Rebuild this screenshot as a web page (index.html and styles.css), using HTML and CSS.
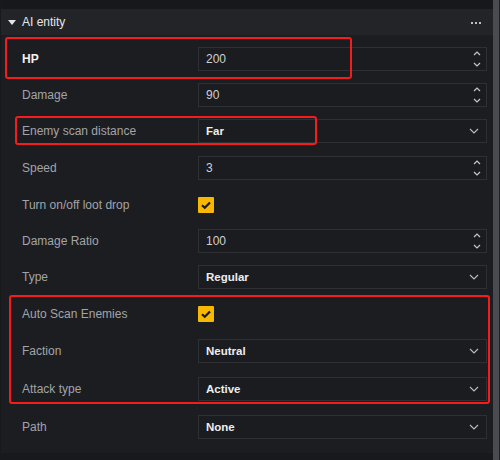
FILE: index.html
```html
<!DOCTYPE html>
<html>
<head>
<meta charset="utf-8">
<link rel="stylesheet" href="styles.css">
</head>
<body>
<div class="app">
  <div class="content">
    <div class="topstrip"></div>
    <div class="header">
      <div class="title">
        <svg class="caret" width="8" height="5" viewBox="0 0 8 5"><path d="M0 0H8L4 5Z" fill="#e6e6e6"/></svg>
        <span>AI entity</span>
      </div>
      <div class="dots"><i></i><i></i><i></i></div>
    </div>
    <div class="rows">
      <div class="row g12">
        <div class="label strong">HP</div>
        <div class="box num"><span>200</span>
          <div class="spin">
            <svg width="8" height="5" viewBox="0 0 8 5"><path d="M1 4L4 1L7 4" fill="none" stroke="#c8c8c8" stroke-width="1.2"/></svg>
            <svg width="8" height="5" viewBox="0 0 8 5"><path d="M1 1L4 4L7 1" fill="none" stroke="#c8c8c8" stroke-width="1.2"/></svg>
          </div>
        </div>
      </div>
      <div class="row g12">
        <div class="label">Damage</div>
        <div class="box num"><span>90</span>
          <div class="spin">
            <svg width="8" height="5" viewBox="0 0 8 5"><path d="M1 4L4 1L7 4" fill="none" stroke="#c8c8c8" stroke-width="1.2"/></svg>
            <svg width="8" height="5" viewBox="0 0 8 5"><path d="M1 1L4 4L7 1" fill="none" stroke="#c8c8c8" stroke-width="1.2"/></svg>
          </div>
        </div>
      </div>
      <div class="row g13">
        <div class="label">Enemy scan distance</div>
        <div class="box sel"><span>Far</span>
          <svg class="chev" width="10" height="6" viewBox="0 0 10 6"><path d="M1 1L5 5L9 1" fill="none" stroke="#bdbdbd" stroke-width="1.1"/></svg>
        </div>
      </div>
      <div class="row g13">
        <div class="label">Speed</div>
        <div class="box num"><span>3</span>
          <div class="spin">
            <svg width="8" height="5" viewBox="0 0 8 5"><path d="M1 4L4 1L7 4" fill="none" stroke="#c8c8c8" stroke-width="1.2"/></svg>
            <svg width="8" height="5" viewBox="0 0 8 5"><path d="M1 1L4 4L7 1" fill="none" stroke="#c8c8c8" stroke-width="1.2"/></svg>
          </div>
        </div>
      </div>
      <div class="row g12">
        <div class="label">Turn on/off loot drop</div>
        <div class="check">
          <svg width="16" height="16" viewBox="0 0 16 16"><path d="M4 8.2L6.8 10.8L12 5.4" fill="none" stroke="#1b1b1b" stroke-width="2.2"/></svg>
        </div>
      </div>
      <div class="row g12">
        <div class="label">Damage Ratio</div>
        <div class="box num"><span>100</span>
          <div class="spin">
            <svg width="8" height="5" viewBox="0 0 8 5"><path d="M1 4L4 1L7 4" fill="none" stroke="#c8c8c8" stroke-width="1.2"/></svg>
            <svg width="8" height="5" viewBox="0 0 8 5"><path d="M1 1L4 4L7 1" fill="none" stroke="#c8c8c8" stroke-width="1.2"/></svg>
          </div>
        </div>
      </div>
      <div class="row g13">
        <div class="label">Type</div>
        <div class="box sel"><span>Regular</span>
          <svg class="chev" width="10" height="6" viewBox="0 0 10 6"><path d="M1 1L5 5L9 1" fill="none" stroke="#bdbdbd" stroke-width="1.1"/></svg>
        </div>
      </div>
      <div class="row g13">
        <div class="label">Auto Scan Enemies</div>
        <div class="check">
          <svg width="16" height="16" viewBox="0 0 16 16"><path d="M4 8.2L6.8 10.8L12 5.4" fill="none" stroke="#1b1b1b" stroke-width="2.2"/></svg>
        </div>
      </div>
      <div class="row g14">
        <div class="label">Faction</div>
        <div class="box sel"><span>Neutral</span>
          <svg class="chev" width="10" height="6" viewBox="0 0 10 6"><path d="M1 1L5 5L9 1" fill="none" stroke="#bdbdbd" stroke-width="1.1"/></svg>
        </div>
      </div>
      <div class="row g14">
        <div class="label">Attack type</div>
        <div class="box sel"><span>Active</span>
          <svg class="chev" width="10" height="6" viewBox="0 0 10 6"><path d="M1 1L5 5L9 1" fill="none" stroke="#bdbdbd" stroke-width="1.1"/></svg>
        </div>
      </div>
      <div class="row">
        <div class="label">Path</div>
        <div class="box sel"><span>None</span>
          <svg class="chev" width="10" height="6" viewBox="0 0 10 6"><path d="M1 1L5 5L9 1" fill="none" stroke="#bdbdbd" stroke-width="1.1"/></svg>
        </div>
      </div>
    </div>
    <div class="bottomstrip"></div>
  </div>
  <div class="scrollbar"></div>
  <div class="edge"></div>
</div>
<div class="mark mark-hp"></div>
<div class="mark mark-scan"></div>
<div class="mark mark-group"></div>
</body>
</html>
```

FILE: styles.css
```css
* { box-sizing: border-box; }
html, body {
  margin: 0;
  padding: 0;
  width: 500px;
  height: 460px;
  overflow: hidden;
  background: #1c1d21;
  font-family: "Liberation Sans", Arial, sans-serif;
  font-size: 12px;
}
body { position: relative; }
.app {
  display: flex;
  width: 500px;
  height: 460px;
}
.content {
  width: 493px;
  display: flex;
  flex-direction: column;
  border-left: 1px solid #18191c;
}
.topstrip {
  height: 9px;
  background: #17181b;
}
.header {
  height: 26px;
  background: #232428;
  display: flex;
  align-items: center;
  justify-content: space-between;
  padding: 0 12px 0 7px;
}
.title {
  display: flex;
  align-items: center;
  gap: 6px;
  color: #e4e6ea;
  font-size: 12px;
}
.caret { margin-top: 1px; }
.dots {
  display: flex;
  gap: 2px;
  margin-top: 1px;
}
.dots i {
  display: block;
  width: 2px;
  height: 2px;
  background: #bfc0c4;
}
.rows {
  padding-top: 12px;
  flex: 1;
}
.row {
  height: 24px;
  display: grid;
  grid-template-columns: 197px 289px;
  align-items: center;
}
.g12 { margin-bottom: 12px; }
.g13 { margin-bottom: 13px; }
.g14 { margin-bottom: 14px; }
.label {
  padding-left: 21px;
  color: #a3a4a8;
  font-size: 12px;
}
.label.strong {
  color: #f2f2f2;
  font-weight: bold;
}
.box {
  height: 24px;
  border: 1px solid #2f3034;
  background: #1b1c20;
  display: flex;
  align-items: center;
  justify-content: space-between;
  padding-left: 7px;
}
.num { color: #cfd0d3; padding-right: 5px; }
.sel { color: #eeeeee; font-weight: bold; font-size: 11.5px; padding-right: 7px; }
.spin {
  display: flex;
  flex-direction: column;
  gap: 6px;
}
.spin svg { display: block; }
.chev { display: block; }
.check {
  width: 16px;
  height: 16px;
  background: #f6b800;
  border-radius: 1px;
}
.check svg { display: block; }
.bottomstrip {
  height: 7px;
  background: #18191c;
}
.scrollbar {
  width: 6px;
  background: #4a4b50;
}
.edge {
  width: 1px;
  background: #202125;
}
.mark {
  position: absolute;
  border: 2px solid #f41d1d;
  border-radius: 3px;
}
.mark-hp { left: 5px; top: 37px; width: 347px; height: 42px; }
.mark-scan { left: 15px; top: 116px; width: 302px; height: 29px; }
.mark-group { left: 9px; top: 295px; width: 481px; height: 109px; }
```
